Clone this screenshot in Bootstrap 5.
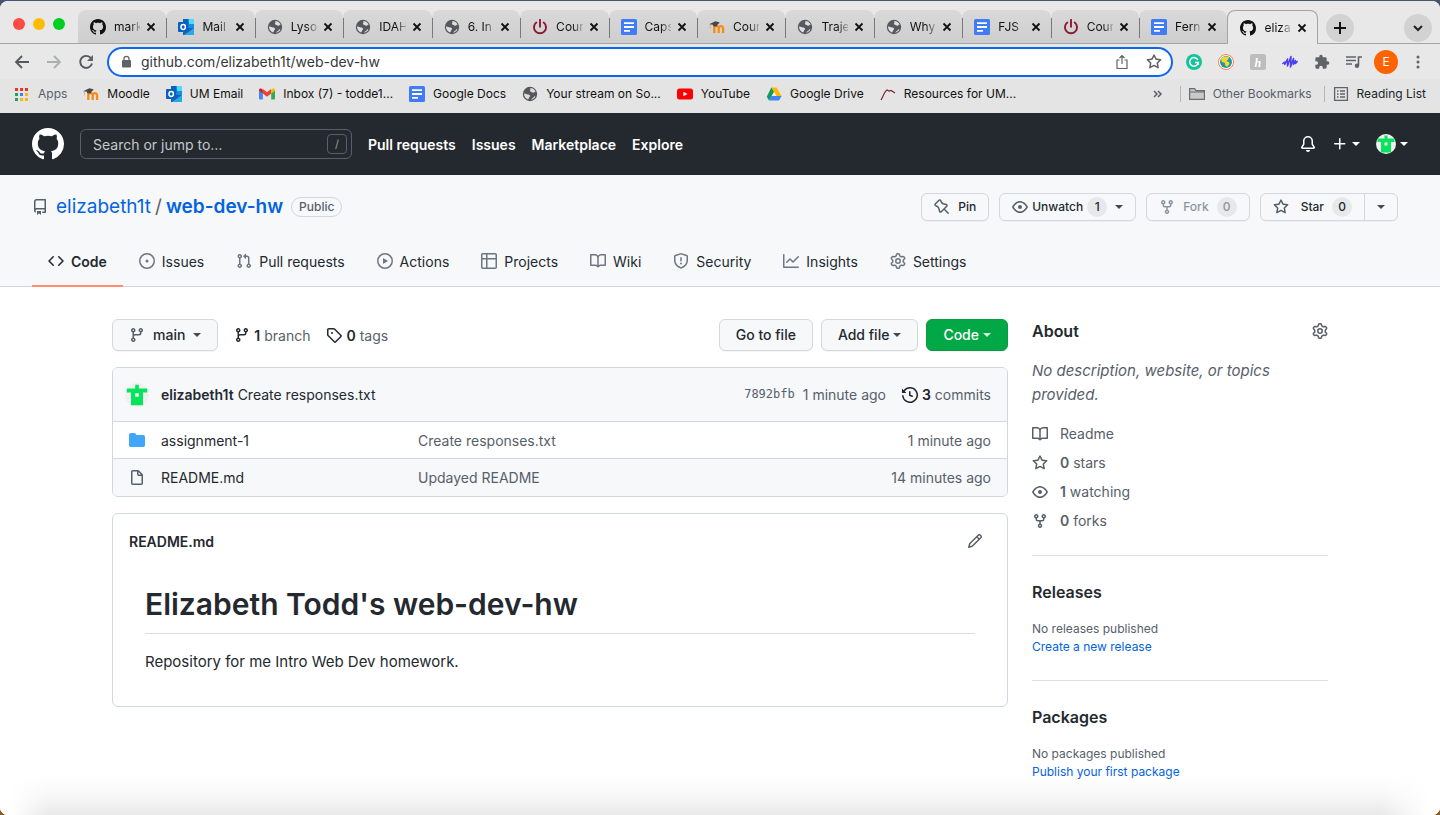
<!DOCTYPE html>
<html lang="en">
<head>
<meta charset="utf-8">
<meta name="viewport" content="width=device-width, initial-scale=1">
<title>elizabeth1t/web-dev-hw</title>
<link href="https://cdn.jsdelivr.net/npm/bootstrap@5.3.0/dist/css/bootstrap.min.css" rel="stylesheet">
<style>
  :root { --ink:#24292f; --muted:#57606a; --line:#d0d7de; --soft:#f6f8fa; --blue:#0563df; }
  body { font-family: Inter, "Liberation Sans", sans-serif; font-size:14px; line-height:21px; color:var(--ink);
         background:linear-gradient(#46526f 50%, #8a5a24 50%); }
  a { color:inherit; text-decoration:none; }
  a:hover { text-decoration:underline; }
  svg { flex:none; fill:currentColor; }
  .i16 { width:16px; height:16px; }
  .semi { font-weight:600; }
  .plain { background:none; border:0; padding:0; color:inherit; display:flex; align-items:center; justify-content:center; }
  .muted { color:var(--muted); }
  .link-blue { color:var(--blue); }
  .caret { width:0; height:0; border:4px solid transparent; border-top-color:currentColor; border-bottom:0; flex:none; }

  /* browser window */
  .window { border-radius:8px; overflow:hidden; background:#fff; margin-top:1px; min-height:calc(100vh - 1px); }
  .tabstrip { height:43px; padding-top:9px; background:#e8e8e8; border-bottom:1px solid #a3a5a2; font-size:12px; }
  .lights { flex:none; width:78px; padding-left:13px; gap:8px; height:27px; }
  .lights span { width:12px; height:12px; border-radius:50%; }
  .tabs-row { flex:1 1 0; min-width:0; }
  .tab { flex:1 1 0; min-width:0; height:33px; padding:0 9px 0 12px; gap:8px; background:linear-gradient(#d9d9d9,#cecece);
         border-radius:8px 8px 0 0; color:#111; position:relative; }
  .tab + .tab:not(.current)::before { content:""; position:absolute; left:0; top:8px; height:20px; width:1px; background:#77797b; }
  .tab .name { flex:1; min-width:0; margin-right:-3px; white-space:nowrap;
         -webkit-mask-image:linear-gradient(90deg,#000 60%,#0003); mask-image:linear-gradient(90deg,#000 60%,#0003); }
  .tab.current { background:#e9e9e9; border:1px solid #a3a5a2; border-bottom:0; height:34px; }
  .tab .plain { width:12px; height:12px; flex:none; }
  .round { width:28px; height:28px; border-radius:50%; background:#d2d2d2; color:#111; }
  .strip-end { flex:none; width:122px; padding:0 8px; height:36px; }
  .toolbar { height:35px; background:#e8e8e8; padding:0 14px; color:#5f6368; }
  .omni { height:30px; border:2px solid #0b66f2; border-radius:15px; background:#fff; margin:0 13px; padding:0 9px 0 12px; gap:8px; }
  .omni input { border:0; outline:0; background:none; flex:1; min-width:0; color:#35383c; font-size:14px; padding:0; }
  .profile { width:24px; height:24px; margin:0 -4px; border-radius:50%; background:#ff6200; color:#fff; font-size:12px; }
  .bookmarks { height:34px; background:#e4e4e4; padding:0 14px 5px; font-size:12px; color:#111; white-space:nowrap; }
  .bookmarks a { display:flex; align-items:center; gap:8px; }
  .rule { width:1px; height:16px; background:#b5b5b5; }

  /* site header */
  .site { background:#24292f; color:#fff; padding:15px 32px; min-height:62px; }
  .find { width:272px; height:30px; border:1px solid #57606a; border-radius:6px; padding:0 4px 0 12px; }
  .find input { background:none; border:0; outline:0; color:#fff; font-size:14px; padding:0; width:100%; }
  .find input::placeholder { color:#c5c8cb; opacity:1; }
  .slash { width:20px; height:20px; border:1px solid #57606a; border-radius:4px; color:#9a9fa5; font-size:11px; line-height:18px; text-align:center; flex:none; }
  .repo { background:var(--soft); border-bottom:1px solid var(--line); padding:17px 32px 0; }
  .repo-name { font-size:19px; line-height:30px; font-weight:400; }
  .pill { border:1px solid var(--line); border-radius:20px; font-size:12px; line-height:18px; padding:0 7px; font-weight:500; color:var(--muted); }
  .gbtn { --bs-btn-padding-y:0; display:inline-flex; align-items:center; font-size:14px; font-weight:500; height:32px; padding:0 16px; line-height:20px;
          border:1px solid #d5d8da; border-radius:6px; background:var(--soft); color:var(--ink); box-shadow:0 1px 0 #1b1f240a; white-space:nowrap; }
  .gbtn.mini { font-size:12px; height:28px; padding:0 12px; }
  .gbtn svg { color:#57606a; }
  .gbtn .caret { color:#424a53; }
  .gbtn:disabled { color:#8c959f; border-color:#d5d8da; background:var(--soft); opacity:1; }
  .gbtn:disabled svg { color:#8c959f; }
  .gbtn.green { background:#02a845; border-color:#0b9a42; color:#fff; }
  .gbtn.green .caret { color:#d5f2df; }
  .repo-actions { gap:10px; padding-right:10px; }
  .count { background:#e6e8ea; border-radius:20px; min-width:20px; line-height:20px; padding:0 6px; font-size:12px; }
  .sections { margin-top:15px; }
  .sections a { display:flex; align-items:center; gap:7px; padding:0 16px; height:50px; color:var(--ink); border-bottom:2px solid transparent; margin-bottom:-1px; }
  .sections a svg { color:#6e7781; }
  .sections a.on { border-color:#fd8c73; font-weight:600; }
  .sections a.on svg { color:var(--ink); }

  /* repository body */
  .wrap { max-width:1280px; margin:0 auto; padding:32px 32px 34px; display:grid; grid-template-columns:minmax(0,1fr) 296px; gap:24px; }
  .box { border:1px solid var(--line); border-radius:6px; overflow:hidden; background:#fff; }
  .commit { background:var(--soft); padding:16px 16px 16px 12px; height:53px; }
  .mono { font-family:"DejaVu Sans Mono", monospace; font-size:12px; }
  .files { width:100%; table-layout:fixed; border-collapse:separate; border-spacing:0; }
  .files td { height:37px; padding:0; border-top:1px solid var(--line); color:var(--muted); }
  .files tr:last-child td { background:var(--soft); height:38px; }
  .files .kind { width:48px; padding-left:16px; }
  .files .what { color:var(--ink); width:257px; }
  .files .when { text-align:right; padding-right:16px; width:180px; }
  .readme-bar { height:54px; padding:0 24px 0 16px; }
  .readme { padding:16px 32px 32px; font-size:15px; line-height:24px; }
  .readme h1 { font-size:30px; line-height:40px; font-weight:600; padding-bottom:9px; border-bottom:1px solid #d8dee4; margin-bottom:16px; }
  aside h2 { font-size:16px; line-height:24px; font-weight:600; margin-bottom:16px; }
  aside section { border-bottom:1px solid #d8dee4; padding-bottom:24px; margin-bottom:24px; }
  aside section:last-child { border:0; margin:0; padding:0; }
  .about { font-size:15px; line-height:24px; font-style:italic; margin-bottom:16px; }
  .facts li { display:flex; align-items:center; gap:12px; margin-bottom:8px; }
  .facts li:last-child { margin-bottom:0; }
  .tiny { font-size:12px; line-height:18px; }
  .page { background:
      linear-gradient(90deg,#fff 10px,#fff0 50px,#fff0 calc(100% - 60px),#fff calc(100% - 12px)) no-repeat bottom/100% 40px,
      linear-gradient(#fff,#f8f8f8 50%,#e9e9e9) no-repeat bottom/100% 40px, #fff; }
</style>
</head>
<body>
<svg width="0" height="0" class="d-none">
  <symbol id="mark-gh" viewBox="0 0 16 16"><path d="M8 0C3.58 0 0 3.58 0 8c0 3.54 2.29 6.53 5.47 7.59.4.07.55-.17.55-.38 0-.19-.01-.82-.01-1.49-2.01.37-2.53-.49-2.69-.94-.09-.23-.48-.94-.82-1.13-.28-.15-.68-.52-.01-.53.63-.01 1.08.58 1.23.82.72 1.21 1.87.87 2.33.66.07-.52.28-.87.51-1.07-1.78-.2-3.64-.89-3.64-3.95 0-.87.31-1.59.82-2.15-.08-.2-.36-1.02.08-2.12 0 0 .67-.21 2.2.82.64-.18 1.32-.27 2-.27.68 0 1.36.09 2 .27 1.53-1.04 2.2-.82 2.2-.82.44 1.1.16 1.92.08 2.12.51.56.82 1.27.82 2.15 0 3.07-1.87 3.75-3.65 3.95.29.25.54.73.54 1.48 0 1.07-.01 1.93-.01 2.2 0 .21.15.46.55.38A8.013 8.013 0 0016 8c0-4.42-3.58-8-8-8z"/></symbol>
  <symbol id="repo" viewBox="0 0 16 16"><path fill-rule="evenodd" d="M2 2.5A2.5 2.5 0 014.5 0h8.75a.75.75 0 01.75.75v12.5a.75.75 0 01-.75.75h-2.5a.75.75 0 110-1.5h1.75v-2h-8a1 1 0 00-.714 1.7.75.75 0 01-1.072 1.05A2.495 2.495 0 012 11.5v-9zm10.5-1V9h-8c-.356 0-.694.074-1 .208V2.5a1 1 0 011-1h8zM5 12.25v3.25a.25.25 0 00.4.2l1.45-1.087a.25.25 0 01.3 0L8.6 15.7a.25.25 0 00.4-.2v-3.25a.25.25 0 00-.25-.25h-3.5a.25.25 0 00-.25.25z"/></symbol>
  <symbol id="code" viewBox="0 0 16 16"><path d="M4.72 3.22a.75.75 0 011.06 1.06L2.06 8l3.72 3.72a.75.75 0 11-1.06 1.06L.47 8.53a.75.75 0 010-1.06l4.25-4.25zm6.56 0a.75.75 0 10-1.06 1.06L13.94 8l-3.72 3.72a.75.75 0 101.06 1.06l4.25-4.25a.75.75 0 000-1.06l-4.25-4.25z"/></symbol>
  <symbol id="issue" viewBox="0 0 16 16"><path d="M8 9.5a1.5 1.5 0 100-3 1.5 1.5 0 000 3z"/><path fill-rule="evenodd" d="M8 0a8 8 0 100 16A8 8 0 008 0zM1.5 8a6.5 6.5 0 1113 0 6.5 6.5 0 01-13 0z"/></symbol>
  <symbol id="pull" viewBox="0 0 16 16"><path fill-rule="evenodd" d="M7.177 3.073L9.573.677A.25.25 0 0110 .854v4.792a.25.25 0 01-.427.177L7.177 3.427a.25.25 0 010-.354zM3.75 2.5a.75.75 0 100 1.5.75.75 0 000-1.5zm-2.25.75a2.25 2.25 0 113 2.122v5.256a2.251 2.251 0 11-1.5 0V5.372A2.25 2.25 0 011.5 3.25zM11 2.5h-1V4h1a1 1 0 011 1v5.628a2.251 2.251 0 101.5 0V5A2.5 2.5 0 0011 2.5zm1 10.25a.75.75 0 111.5 0 .75.75 0 01-1.5 0zM3.75 12a.75.75 0 100 1.5.75.75 0 000-1.5z"/></symbol>
  <symbol id="play" viewBox="0 0 16 16"><path fill-rule="evenodd" d="M1.5 8a6.5 6.5 0 1113 0 6.5 6.5 0 01-13 0zM8 0a8 8 0 100 16A8 8 0 008 0zM6.379 5.227A.25.25 0 006 5.442v5.117a.25.25 0 00.379.214l4.264-2.559a.25.25 0 000-.428L6.379 5.227z"/></symbol>
  <symbol id="grid" viewBox="0 0 16 16"><path fill-rule="evenodd" d="M0 1.75C0 .784.784 0 1.75 0h12.5C15.216 0 16 .784 16 1.75v12.5A1.75 1.75 0 0114.25 16H1.75A1.75 1.75 0 010 14.25V1.75zM1.5 6.5v7.75c0 .138.112.25.25.25H5v-8H1.5zM5 5H1.5V1.75a.25.25 0 01.25-.25H5V5zm1.5 1.5v8h7.75a.25.25 0 00.25-.25V6.5h-8zm8-1.5h-8V1.5h7.75a.25.25 0 01.25.25V5z"/></symbol>
  <symbol id="book" viewBox="0 0 16 16"><path fill-rule="evenodd" d="M0 1.75A.75.75 0 01.75 1h4.253c1.227 0 2.317.59 3 1.501A3.744 3.744 0 0111.006 1h4.245a.75.75 0 01.75.75v10.5a.75.75 0 01-.75.75h-4.507a2.25 2.25 0 00-1.591.659l-.622.621a.75.75 0 01-1.06 0l-.622-.621A2.25 2.25 0 005.258 13H.75a.75.75 0 01-.75-.75V1.75zm8.755 3a2.25 2.25 0 012.25-2.25H14.5v9h-3.757c-.71 0-1.4.201-1.992.572l.004-7.322zm-1.504 7.324l.004-5.073-.002-2.253A2.25 2.25 0 005.003 2.5H1.5v9h3.757a3.75 3.75 0 011.994.574z"/></symbol>
  <symbol id="shield" viewBox="0 0 16 16"><path fill-rule="evenodd" d="M7.467.133a1.75 1.75 0 011.066 0l5.25 1.68A1.75 1.75 0 0115 3.48V7c0 1.566-.32 3.182-1.303 4.682-.983 1.498-2.585 2.813-5.032 3.855a1.7 1.7 0 01-1.33 0c-2.447-1.042-4.049-2.357-5.032-3.855C1.32 10.182 1 8.566 1 7V3.48a1.75 1.75 0 011.217-1.667l5.25-1.68zm.61 1.429a.25.25 0 00-.153 0l-5.25 1.68a.25.25 0 00-.174.238V7c0 1.358.275 2.666 1.057 3.86.784 1.194 2.121 2.34 4.366 3.297a.2.2 0 00.154 0c2.245-.956 3.582-2.104 4.366-3.298C13.225 9.666 13.5 8.36 13.5 7V3.48a.25.25 0 00-.174-.237l-5.25-1.68zM9 10.5a1 1 0 11-2 0 1 1 0 012 0zm-.25-5.75a.75.75 0 10-1.5 0v3a.75.75 0 001.5 0v-3z"/></symbol>
  <symbol id="graph" viewBox="0 0 16 16"><path d="M1.5 1.75a.75.75 0 00-1.5 0v12.5c0 .414.336.75.75.75h14.5a.75.75 0 000-1.5H1.5V1.75zm14.28 2.53a.75.75 0 00-1.06-1.06L10 7.94 7.53 5.47a.75.75 0 00-1.06 0L3.22 8.72a.75.75 0 001.06 1.06L7 7.06l2.47 2.47a.75.75 0 001.06 0l5.25-5.25z"/></symbol>
  <symbol id="gear" viewBox="0 0 16 16"><path fill-rule="evenodd" d="M7.429 1.525a6.593 6.593 0 011.142 0c.036.003.108.036.137.146l.289 1.105c.147.56.55.967.997 1.189.174.086.341.183.501.29.417.278.97.423 1.53.27l1.102-.303c.11-.03.175.016.195.046.219.31.41.641.573.989.014.031.022.11-.059.19l-.815.806c-.411.406-.562.957-.53 1.456a4.588 4.588 0 010 .582c-.032.499.119 1.05.53 1.456l.815.806c.08.08.073.159.059.19a6.494 6.494 0 01-.573.99c-.02.029-.086.074-.195.045l-1.103-.303c-.559-.153-1.112-.008-1.529.27-.16.107-.327.204-.5.29-.449.222-.851.628-.998 1.189l-.289 1.105c-.029.11-.101.143-.137.146a6.613 6.613 0 01-1.142 0c-.036-.003-.108-.037-.137-.146l-.289-1.105c-.147-.56-.55-.967-.997-1.189a4.502 4.502 0 01-.501-.29c-.417-.278-.97-.423-1.53-.27l-1.102.303c-.11.03-.175-.016-.195-.046a6.492 6.492 0 01-.573-.989c-.014-.031-.022-.11.059-.19l.815-.806c.411-.406.562-.957.53-1.456a4.587 4.587 0 010-.582c.032-.499-.119-1.05-.53-1.456l-.815-.806c-.08-.08-.073-.159-.059-.19a6.44 6.44 0 01.573-.99c.02-.029.086-.075.195-.045l1.103.303c.559.153 1.112.008 1.529-.27.16-.107.327-.204.5-.29.449-.222.851-.628.998-1.189l.289-1.105c.029-.11.101-.143.137-.146zM8 0c-.236 0-.47.01-.701.03-.743.065-1.29.615-1.458 1.261l-.29 1.106c-.017.066-.078.158-.211.224a5.994 5.994 0 00-.668.386c-.123.082-.233.09-.3.071L3.27 2.776c-.644-.177-1.392.02-1.82.63a7.977 7.977 0 00-.704 1.217c-.315.675-.111 1.422.363 1.891l.815.806c.05.048.098.147.088.294a6.084 6.084 0 000 .772c.01.147-.038.246-.088.294l-.815.806c-.474.469-.678 1.216-.363 1.891.2.428.436.835.704 1.218.428.609 1.176.806 1.82.63l1.103-.303c.066-.019.176-.011.299.071.213.143.436.272.668.386.133.066.194.158.212.224l.289 1.106c.169.646.715 1.196 1.458 1.26a8.094 8.094 0 001.402 0c.743-.064 1.29-.614 1.458-1.26l.29-1.106c.017-.066.078-.158.211-.224a5.98 5.98 0 00.668-.386c.123-.082.233-.09.3-.071l1.102.302c.644.177 1.392-.02 1.82-.63.268-.382.505-.789.704-1.217.315-.675.111-1.422-.364-1.891l-.814-.806c-.05-.048-.098-.147-.088-.294a6.1 6.1 0 000-.772c-.01-.147.039-.246.088-.294l.814-.806c.475-.469.679-1.216.364-1.891a7.992 7.992 0 00-.704-1.218c-.428-.609-1.176-.806-1.82-.63l-1.103.303c-.066.019-.176.011-.299-.071a5.991 5.991 0 00-.668-.386c-.133-.066-.194-.158-.212-.224L10.16 1.29C9.99.645 9.444.095 8.701.031A8.094 8.094 0 008 0zm1.5 8a1.5 1.5 0 11-3 0 1.5 1.5 0 013 0zM11 8a3 3 0 11-6 0 3 3 0 016 0z"/></symbol>
  <symbol id="branch" viewBox="0 0 16 16"><path fill-rule="evenodd" d="M11.75 2.5a.75.75 0 100 1.5.75.75 0 000-1.5zm-2.25.75a2.25 2.25 0 113 2.122V6A2.5 2.5 0 0110 8.5H6a1 1 0 00-1 1v1.128a2.251 2.251 0 11-1.5 0V5.372a2.25 2.25 0 111.5 0v1.836A2.492 2.492 0 016 7h4a1 1 0 001-1v-.628A2.25 2.25 0 019.5 3.25zM4.25 12a.75.75 0 100 1.5.75.75 0 000-1.5zM3.5 3.25a.75.75 0 111.5 0 .75.75 0 01-1.5 0z"/></symbol>
  <symbol id="tag" viewBox="0 0 16 16"><path fill-rule="evenodd" d="M2.5 7.775V2.75a.25.25 0 01.25-.25h5.025a.25.25 0 01.177.073l6.25 6.25a.25.25 0 010 .354l-5.025 5.025a.25.25 0 01-.354 0l-6.25-6.25a.25.25 0 01-.073-.177zm-1.5 0V2.75C1 1.784 1.784 1 2.75 1h5.025c.464 0 .91.184 1.238.513l6.25 6.25a1.75 1.75 0 010 2.474l-5.026 5.026a1.75 1.75 0 01-2.474 0l-6.25-6.25A1.75 1.75 0 011 7.775zM6 5a1 1 0 100 2 1 1 0 000-2z"/></symbol>
  <symbol id="history" viewBox="0 0 16 16"><path fill-rule="evenodd" d="M1.643 3.143L.427 1.927A.25.25 0 000 2.104V5.75c0 .138.112.25.25.25h3.646a.25.25 0 00.177-.427L2.715 4.215a6.5 6.5 0 11-1.18 4.458.75.75 0 10-1.493.154 8.001 8.001 0 101.6-5.684zM7.75 4a.75.75 0 01.75.75v2.992l2.028.812a.75.75 0 01-.557 1.392l-2.5-1A.75.75 0 017 8.25v-3.5A.75.75 0 017.75 4z"/></symbol>
  <symbol id="folder" viewBox="0 0 16 16"><path d="M1.75 1A1.75 1.75 0 000 2.75v10.5C0 14.216.784 15 1.75 15h12.5A1.75 1.75 0 0016 13.25v-8.5A1.75 1.75 0 0014.25 3h-6.5a.25.25 0 01-.2-.1l-.9-1.2c-.33-.44-.85-.7-1.4-.7h-3.5z"/></symbol>
  <symbol id="file" viewBox="0 0 16 16"><path fill-rule="evenodd" d="M3.75 1.5a.25.25 0 00-.25.25v11.5c0 .138.112.25.25.25h8.5a.25.25 0 00.25-.25V6H9.75A1.75 1.75 0 018 4.25V1.5H3.75zm5.75.56v2.19c0 .138.112.25.25.25h2.19L9.5 2.06zM2 1.75C2 .784 2.784 0 3.75 0h5.086c.464 0 .909.184 1.237.513l3.414 3.414c.329.328.513.773.513 1.237v8.086A1.75 1.75 0 0112.25 15h-8.5A1.75 1.75 0 012 13.25V1.75z"/></symbol>
  <symbol id="pencil" viewBox="0 0 16 16"><path fill-rule="evenodd" d="M11.013 1.427a1.75 1.75 0 012.474 0l1.086 1.086a1.75 1.75 0 010 2.474l-8.61 8.61c-.21.21-.47.364-.756.445l-3.251.93a.75.75 0 01-.927-.928l.929-3.25a1.75 1.75 0 01.445-.758l8.61-8.61zm1.414 1.06a.25.25 0 00-.354 0L10.811 3.75l1.439 1.44 1.263-1.263a.25.25 0 000-.354l-1.086-1.086zM11.189 6.25L9.75 4.81l-6.286 6.287a.25.25 0 00-.064.108l-.558 1.953 1.953-.558a.249.249 0 00.108-.064l6.286-6.286z"/></symbol>
  <symbol id="star" viewBox="0 0 16 16"><path fill-rule="evenodd" d="M8 .25a.75.75 0 01.673.418l1.882 3.815 4.21.612a.75.75 0 01.416 1.279l-3.046 2.97.719 4.192a.75.75 0 01-1.088.791L8 12.347l-3.766 1.98a.75.75 0 01-1.088-.79l.72-4.194L.818 6.374a.75.75 0 01.416-1.28l4.21-.611L7.327.668A.75.75 0 018 .25zm0 2.445L6.615 5.5a.75.75 0 01-.564.41l-3.097.45 2.24 2.184a.75.75 0 01.216.664l-.528 3.084 2.769-1.456a.75.75 0 01.698 0l2.77 1.456-.53-3.084a.75.75 0 01.216-.664l2.24-2.183-3.096-.45a.75.75 0 01-.564-.41L8 2.694v.001z"/></symbol>
  <symbol id="eye" viewBox="0 0 16 16"><path fill-rule="evenodd" d="M1.679 7.932c.412-.621 1.242-1.75 2.366-2.717C5.175 4.242 6.527 3.5 8 3.5c1.473 0 2.824.742 3.955 1.715 1.124.967 1.954 2.096 2.366 2.717a.119.119 0 010 .136c-.412.621-1.242 1.75-2.366 2.717C10.825 11.758 9.473 12.5 8 12.5c-1.473 0-2.824-.742-3.955-1.715C2.92 9.818 2.09 8.69 1.679 8.068a.119.119 0 010-.136zM8 2c-1.981 0-3.67.992-4.933 2.078C1.797 5.169.88 6.423.43 7.1a1.619 1.619 0 000 1.798c.45.678 1.367 1.932 2.637 3.024C4.329 13.008 6.019 14 8 14c1.981 0 3.67-.992 4.933-2.078 1.27-1.091 2.187-2.345 2.637-3.023a1.619 1.619 0 000-1.798c-.45-.678-1.367-1.932-2.637-3.023C11.671 2.992 9.981 2 8 2zm0 8a2 2 0 100-4 2 2 0 000 4z"/></symbol>
  <symbol id="fork" viewBox="0 0 16 16"><path fill-rule="evenodd" d="M5 3.25a.75.75 0 11-1.5 0 .75.75 0 011.5 0zm0 2.122a2.25 2.25 0 10-1.5 0v.878A2.25 2.25 0 005.75 8.5h1.5v2.128a2.251 2.251 0 101.5 0V8.5h1.5a2.25 2.25 0 002.25-2.25v-.878a2.25 2.25 0 10-1.5 0v.878a.75.75 0 01-.75.75h-4.5A.75.75 0 015 6.25v-.878zm3.75 7.378a.75.75 0 11-1.5 0 .75.75 0 011.5 0zm3-8.75a.75.75 0 100-1.5.75.75 0 000 1.5z"/></symbol>
  <symbol id="pin" viewBox="0 0 16 16"><path fill-rule="evenodd" d="M4.456.734a1.75 1.75 0 012.826.504l.613 1.327a3.081 3.081 0 002.084 1.707l2.454.584c1.332.317 1.8 1.972.832 2.94L11.06 10l3.72 3.72a.75.75 0 11-1.061 1.06L10 11.06l-2.204 2.205c-.968.968-2.623.5-2.94-.832l-.584-2.454a3.081 3.081 0 00-1.707-2.084l-1.327-.613a1.75 1.75 0 01-.504-2.826L4.456.734zM5.92 1.866a.25.25 0 00-.404-.072L1.794 5.516a.25.25 0 00.072.404l1.328.613A4.582 4.582 0 015.73 9.63l.584 2.454a.25.25 0 00.42.12l5.47-5.47a.25.25 0 00-.12-.42L9.63 5.73a4.581 4.581 0 01-3.098-2.537L5.92 1.866z"/></symbol>
  <symbol id="bell" viewBox="0 0 16 16"><path d="M8 16a2 2 0 001.985-1.75c.017-.137-.097-.25-.235-.25h-3.5c-.138 0-.252.113-.235.25A2 2 0 008 16z"/><path fill-rule="evenodd" d="M8 1.5A3.5 3.5 0 004.5 5v2.947c0 .346-.102.683-.294.97l-1.703 2.556a.018.018 0 00-.003.01l.001.006.017.011h10.964l.017-.011.001-.007a.017.017 0 00-.003-.01l-1.703-2.554a1.75 1.75 0 01-.294-.97V5A3.5 3.5 0 008 1.5zM3 5a5 5 0 0110 0v2.947c0 .05.015.098.042.139l1.703 2.555A1.518 1.518 0 0113.482 13H2.518a1.518 1.518 0 01-1.263-2.36l1.703-2.554A.25.25 0 003 7.947V5z"/></symbol>
  <symbol id="plus" viewBox="0 0 16 16"><path d="M7.75 2a.75.75 0 01.75.75V7h4.25a.75.75 0 110 1.5H8.5v4.25a.75.75 0 11-1.5 0V8.5H2.75a.75.75 0 010-1.5H7V2.75A.75.75 0 017.75 2z"/></symbol>
  <symbol id="avatar" viewBox="0 0 20 20"><circle cx="10" cy="10" r="10" fill="#f0f0f0"/><path fill="#05e45c" fill-rule="evenodd" d="M8.500 1.500h3v3h7v3.500h-3.500v10.500h-10v-10.500h-3.500v-3.500h7zM8.500 8.500v3h3v-3z"/></symbol>

  <symbol id="x" viewBox="0 0 12 12"><path d="M2.500 2.500l7 7M9.500 2.500l-7 7" stroke="currentColor" stroke-width="1.800" fill="none"/></symbol>
  <symbol id="globe" viewBox="0 0 16 16"><circle cx="8" cy="8" r="7.200" fill="#55585e"/><path fill="#dedede" d="M8.200 1.900c2.500 0 4.600 1.500 5.500 3.600-1.200.3-1.600 1.300-2.700 1.300-1 0-1-.9-2-1-.8-.1-1.300-.5-1.100-1.200.2-.8 1-.8.3-2.700zM2 7.600c1.700-.2 2.600.8 3.800.8 1.400 0 2.400.5 2.300 1.600-.1.900-1.200 1-1.200 2 0 .6-.4 1-.9 1.400C3.600 12.600 2 10.400 2 7.600zM9.300 13.800c.3-.8.600-1.600 1.500-1.900.8-.3 1.300-.9 1.400-1.700l1.200.400c-.7 1.600-2.300 2.900-4.100 3.200z"/></symbol>
  <symbol id="outlook" viewBox="0 0 16 16"><path fill="#1490df" d="M5 0h11v10H5z"/><path fill="#28a8ea" d="M5 5h5.500v5H5z"/><path fill="#50d9ff" d="M10.500 0H16v5h-5.500z"/><path fill="#0364b8" d="M5 0h5.500v5H5z"/><path fill="#1066b5" d="M5 9h11v7H5z"/><path fill="#28a8ea" d="M16 9v7H6z"/><rect y="3" width="10.500" height="10" rx="1" fill="#0a5fc0"/><ellipse cx="5.200" cy="8" rx="2.200" ry="2.400" fill="none" stroke="#fff" stroke-width="1.500"/></symbol>
  <symbol id="power" viewBox="0 0 16 16"><path d="M4.300 3.600a6 6 0 1 0 7.400 0M8 .8v7" fill="none" stroke="#8b1a33" stroke-width="1.900" stroke-linecap="round"/></symbol>
  <symbol id="docs" viewBox="0 0 16 16"><rect width="16" height="16" rx="1.500" fill="#3f7cf6"/><path d="M3 4.200h10M3 8h10M3 11.800h6" stroke="#fff" stroke-width="1.800"/></symbol>
  <symbol id="moodle" viewBox="0 0 16 16"><path d="M5.300 14V9.300a2.200 2.200 0 0 1 4.400 0V14M9.700 9.300a2.200 2.200 0 0 1 4.400 0V14" fill="none" stroke="#f98a12" stroke-width="2.300"/><path fill="#4a4643" d="M0 5.200 6.500 2.300l4.300 1.200L8.500 5.800 7.800 7.500 4 7.200V5.800z"/><path d="M1.500 5.300v4" stroke="#caa982" stroke-width=".800"/></symbol>
  <symbol id="gmail" viewBox="0 0 16 16"><path fill="#4285f4" d="M1 13.500h2.800V7L0 4v8.500a1 1 0 0 0 1 1z"/><path fill="#34a853" d="M12.200 13.500H15a1 1 0 0 0 1-1V4l-3.800 3z"/><path fill="#ea4335" d="M3.800 7.500V3L8 6.200 12.200 3v4.500L8 10.700z"/><path fill="#c5221f" d="M0 4.500V4c0-1.500 1.500-2 2.600-1.200L3.800 3.700v3.800z"/><path fill="#fbbc04" d="M16 4.500V4c0-1.500-1.500-2-2.600-1.200l-1.200.900v3.800z"/></symbol>
  <symbol id="youtube" viewBox="0 0 16 16"><rect y="2.500" width="16" height="11" rx="2.500" fill="#f00"/><path fill="#fff" d="M6.400 5.700v4.600L10.500 8z"/></symbol>
  <symbol id="drive" viewBox="0 0 16 16"><path fill="#0f9d58" d="M5.300 1.500h.4l2.500 4.300L3 14.500.8 10.800z"/><path fill="#ffba00" d="M5.400 1.500h5.200l5 8.500h-5.200z"/><path fill="#4285f4" d="M5 10h10.600L13 14.500H3z"/><path fill="#e9f0fb" d="M8.100 5.900 10.500 10H5.700z"/></symbol>
</svg>

<div class="window d-flex flex-column">
  <div class="tabstrip d-flex">
    <div class="lights d-flex align-items-center"><span style="background:#fe4a42"></span><span style="background:#febc02"></span><span style="background:#00cf22"></span></div>
    <div class="tabs-row d-flex" id="tabs"></div>
    <div class="strip-end d-flex align-items-center justify-content-between">
      <button class="plain round" aria-label="New tab"><svg width="14" height="14"><path d="M7 1v12M1 7h12" stroke="#111" stroke-width="2"/></svg></button>
      <button class="plain round" aria-label="Search tabs"><svg width="12" height="12"><path d="M2 4l4 4 4-4" fill="none" stroke="#222" stroke-width="2"/></svg></button>
    </div>
  </div>

  <div class="toolbar d-flex align-items-center">
    <div class="d-flex gap-3">
      <button class="plain" aria-label="Back"><svg class="i16"><path d="M15 8H2M8 2L2 8l6 6" fill="none" stroke="#55595e" stroke-width="1.800"/></svg></button>
      <button class="plain" aria-label="Forward"><svg class="i16"><path d="M1 8h13M8 2l6 6-6 6" fill="none" stroke="#acaeb0" stroke-width="1.800"/></svg></button>
      <button class="plain" aria-label="Reload"><svg class="i16"><path d="M13 4.200A6 6 0 1 0 14 9.500" fill="none" stroke="#55595e" stroke-width="1.900"/><path d="M15 1v6H9z"/></svg></button>
    </div>
    <div class="omni d-flex align-items-center flex-grow-1">
      <svg width="12" height="14" viewBox="0 0 12 14"><rect x="1" y="5" width="9" height="7.500" rx="1"/><path d="M3 5.500V3.800a2.500 2.500 0 0 1 5 0v1.700" fill="none" stroke="currentColor" stroke-width="1.300"/></svg>
      <input type="text" aria-label="Address" value="github.com/elizabeth1t/web-dev-hw">
      <button class="plain me-2" aria-label="Share"><svg class="i16"><path d="M5.500 6H3v8.500h10V6h-2.500M8 10V1.500M5.500 4L8 1.500 10.500 4" fill="none" stroke="currentColor" stroke-width="1.200"/></svg></button>
      <button class="plain" aria-label="Bookmark"><svg class="i16"><use href="#star"/></svg></button>
    </div>
    <div class="d-flex align-items-center gap-3">
      <svg class="i16" viewBox="0 0 16 16"><circle cx="8" cy="8" r="8" fill="#15c39a"/><path d="M11.800 5.800A4.300 4.300 0 1 0 12.200 9M9 8.500h3.300V11" fill="none" stroke="#fff" stroke-width="1.500"/></svg>
      <svg class="i16" viewBox="0 0 16 16"><circle cx="8" cy="8" r="7.500" fill="#fff" stroke="#ff7b50"/><circle cx="8" cy="8" r="6" fill="#2196a6"/><path fill="#f2d92a" d="M3 5c2-3 5-3 8-2l-1 3-2 1 3 1 .500 2-2.500 3-2-2V9L4 8z"/></svg>
      <svg class="i16" viewBox="0 0 16 16"><rect width="16" height="16" rx="2" fill="#bdbdbd"/><text x="4.500" y="12.500" font-size="12" font-weight="700" fill="#fff" font-family="Liberation Serif, serif" font-style="italic">h</text></svg>
      <svg class="i16" viewBox="0 0 16 16"><path d="M.8 9.500 2.800 8v2.500L5.500 5v7L9 2.500 8.500 13 11.500 4.500v6L13.500 6.500v3l1.700-2" fill="none" stroke="#4b3cf5" stroke-width="1.500" stroke-linecap="round" stroke-linejoin="round"/></svg>
      <svg class="i16" viewBox="0 0 24 24"><path d="M20.500 11H19V7a2 2 0 0 0-2-2h-4V3.500a2.500 2.500 0 0 0-5 0V5H4a2 2 0 0 0-2 2v3.800h1.500a2.700 2.700 0 0 1 0 5.400H2V20c0 1.100.9 2 2 2h3.800v-1.500a2.700 2.700 0 0 1 5.400 0V22H17a2 2 0 0 0 2-2v-4h1.500a2.500 2.500 0 0 0 0-5z"/></svg>
      <svg class="i16" viewBox="0 0 16 16"><path d="M0 3h10M0 6.500h10M0 10h6" stroke="currentColor" stroke-width="1.500"/><path d="M12.500 11.500V3H16" fill="none" stroke="currentColor" stroke-width="1.600"/><circle cx="11" cy="11.700" r="2.200"/></svg>
      <button class="plain profile" aria-label="Profile">E</button>
      <button class="plain" aria-label="Menu"><svg class="i16"><circle cx="8" cy="3" r="1.500"/><circle cx="8" cy="8" r="1.500"/><circle cx="8" cy="13" r="1.500"/></svg></button>
    </div>
  </div>

  <div class="bookmarks d-flex align-items-center justify-content-between">
    <div class="d-flex gap-3">
      <a href="#" class="muted"><svg class="i16"><path fill="#f03226" d="M1 2h3v3H1zM6 2h3v3H6zM11 2h3v3h-3z"/><path fill="#1fa45c" d="M1 7h3v3H1zM1 12h3v3H1z"/><path fill="#3b82f6" d="M6 7h3v3H6z"/><path fill="#fbb516" d="M11 7h3v3h-3zM6 12h3v3H6zM11 12h3v3h-3z"/></svg>Apps</a>
      <a href="#"><svg class="i16"><use href="#moodle"/></svg>Moodle</a>
      <a href="#"><svg class="i16"><use href="#outlook"/></svg>UM Email</a>
      <a href="#"><svg class="i16"><use href="#gmail"/></svg>Inbox (7) - todde1...</a>
      <a href="#"><svg class="i16"><use href="#docs"/></svg>Google Docs</a>
      <a href="#"><svg class="i16"><use href="#globe"/></svg>Your stream on So...</a>
      <a href="#"><svg class="i16"><use href="#youtube"/></svg>YouTube</a>
      <a href="#"><svg class="i16"><use href="#drive"/></svg>Google Drive</a>
      <a href="#"><svg class="i16"><path d="M1 14C3 11 4 6 7 4l2 1 2-.5 4 2.500" fill="none" stroke="#7c2438" stroke-width="1.200"/></svg>Resources for UM...</a>
    </div>
    <div class="d-flex align-items-center gap-2 muted">
      <button class="plain me-2" aria-label="More bookmarks"><svg width="12" height="12"><path d="M2 3l3 3-3 3M6 3l3 3-3 3" fill="none" stroke="currentColor" stroke-width="1.500"/></svg></button>
      <span class="rule"></span>
      <a href="#"><svg class="i16"><path d="M.6 13.400V2.600h5l1.500 2h8.300v8.800zM.6 6h14.800" fill="#c9c9c9" stroke="#6a6d70" stroke-width="1.200"/></svg>Other Bookmarks</a>
      <span class="rule ms-1"></span>
      <a href="#" class="text-body"><svg class="i16"><path d="M1.600 1.600h12.800v12.800H1.600z" fill="none" stroke="#5f6368" stroke-width="1.300"/><path d="M4 5h1.500M7 5h5M4 8h1.500M7 8h5M4 11h1.500M7 11h5" stroke="#5f6368" stroke-width="1.400"/></svg>Reading List</a>
    </div>
  </div>

  <header class="site d-flex align-items-center">
    <a href="#" aria-label="Home" class="d-flex me-3"><svg width="32" height="32"><use href="#mark-gh"/></svg></a>
    <form class="find d-flex align-items-center me-3"><input type="text" placeholder="Search or jump to…" aria-label="Search"><span class="slash">/</span></form>
    <nav class="d-flex gap-3 semi"><a href="#">Pull requests</a><a href="#">Issues</a><a href="#">Marketplace</a><a href="#">Explore</a></nav>
    <div class="d-flex align-items-center gap-3 ms-auto">
      <button class="plain" aria-label="Notifications"><svg class="i16"><use href="#bell"/></svg></button>
      <button class="plain gap-1" aria-label="Create new"><svg class="i16"><use href="#plus"/></svg><span class="caret"></span></button>
      <button class="plain gap-1" aria-label="Account"><svg width="20" height="20"><use href="#avatar"/></svg><span class="caret"></span></button>
    </div>
  </header>

  <div class="repo">
    <div class="d-flex align-items-center justify-content-between">
      <div class="d-flex align-items-center gap-2">
        <svg class="i16 muted"><use href="#repo"/></svg>
        <h1 class="repo-name mb-0"><a href="#" class="link-blue">elizabeth1t</a><span class="muted mx-1">/</span><a href="#" class="link-blue semi">web-dev-hw</a></h1>
        <span class="pill">Public</span>
      </div>
      <div class="d-flex repo-actions">
        <button class="btn gbtn mini gap-2"><svg class="i16"><use href="#pin"/></svg>Pin</button>
        <button class="btn gbtn mini gap-1"><svg class="i16"><use href="#eye"/></svg>Unwatch <span class="count">1</span><span class="caret ms-1"></span></button>
        <button class="btn gbtn mini gap-1" disabled><svg class="i16 me-1"><use href="#fork"/></svg>Fork <span class="count ms-1">0</span></button>
        <div class="btn-group"><button class="btn gbtn mini gap-1"><svg class="i16 me-2"><use href="#star"/></svg>Star <span class="count ms-1">0</span></button><button class="btn gbtn mini" aria-label="Lists"><span class="caret"></span></button></div>
      </div>
    </div>
    <nav class="sections d-flex">
      <a href="#" class="on"><svg class="i16"><use href="#code"/></svg>Code</a>
      <a href="#"><svg class="i16"><use href="#issue"/></svg>Issues</a>
      <a href="#"><svg class="i16"><use href="#pull"/></svg>Pull requests</a>
      <a href="#"><svg class="i16"><use href="#play"/></svg>Actions</a>
      <a href="#"><svg class="i16"><use href="#grid"/></svg>Projects</a>
      <a href="#"><svg class="i16"><use href="#book"/></svg>Wiki</a>
      <a href="#"><svg class="i16"><use href="#shield"/></svg>Security</a>
      <a href="#"><svg class="i16"><use href="#graph"/></svg>Insights</a>
      <a href="#"><svg class="i16"><use href="#gear"/></svg>Settings</a>
    </nav>
  </div>

  <div class="page flex-grow-1">
    <div class="wrap">
      <main>
        <div class="d-flex align-items-center justify-content-between mb-3">
          <div class="d-flex align-items-center gap-3">
            <button class="btn gbtn gap-2"><svg class="i16"><use href="#branch"/></svg>main<span class="caret"></span></button>
            <a href="#" class="d-flex align-items-center gap-1"><svg class="i16"><use href="#branch"/></svg><span><strong class="semi">1</strong> <span class="muted">branch</span></span></a>
            <a href="#" class="d-flex align-items-center gap-1"><svg class="i16"><use href="#tag"/></svg><span><strong class="semi">0</strong> <span class="muted">tags</span></span></a>
          </div>
          <div class="d-flex gap-2">
            <button class="btn gbtn">Go to file</button>
            <button class="btn gbtn gap-1">Add file<span class="caret"></span></button>
            <button class="btn gbtn green semi gap-1">Code<span class="caret"></span></button>
          </div>
        </div>

        <div class="box mb-3">
          <div class="commit d-flex align-items-center justify-content-between">
            <div class="d-flex align-items-center gap-1"><svg width="24" height="24" class="me-2"><use href="#avatar"/></svg><a href="#" class="semi">elizabeth1t</a><a href="#">Create responses.txt</a></div>
            <div class="d-flex align-items-center muted gap-2"><a href="#" class="mono">7892bfb</a><span>1 minute ago</span><a href="#" class="d-flex align-items-center gap-1 ms-2"><svg class="i16 text-dark"><use href="#history"/></svg><span><strong class="semi text-dark">3</strong> commits</span></a></div>
          </div>
          <table class="files">
            <tr><td class="kind"><svg class="i16 d-block" style="color:#3fa6fb"><use href="#folder"/></svg></td><td class="what"><a href="#">assignment-1</a></td><td><a href="#">Create responses.txt</a></td><td class="when">1 minute ago</td></tr>
            <tr><td class="kind"><svg class="i16 d-block"><use href="#file"/></svg></td><td class="what"><a href="#">README.md</a></td><td><a href="#">Updayed README</a></td><td class="when">14 minutes ago</td></tr>
          </table>
        </div>

        <div class="box">
          <div class="readme-bar d-flex align-items-center justify-content-between"><a href="#" class="semi">README.md</a><button class="plain muted" aria-label="Edit"><svg class="i16"><use href="#pencil"/></svg></button></div>
          <article class="readme"><h1>Elizabeth Todd's web-dev-hw</h1><p class="mb-0">Repository for me Intro Web Dev homework.</p></article>
        </div>
      </main>

      <aside>
        <section>
          <div class="d-flex justify-content-between"><h2>About</h2><button class="plain muted mb-3" aria-label="Edit details"><svg class="i16"><use href="#gear"/></svg></button></div>
          <p class="about muted">No description, website, or topics provided.</p>
          <ul class="facts list-unstyled muted mb-0">
            <li><svg class="i16"><use href="#book"/></svg><a href="#">Readme</a></li>
            <li><svg class="i16"><use href="#star"/></svg><a href="#"><strong class="semi">0</strong> stars</a></li>
            <li><svg class="i16"><use href="#eye"/></svg><a href="#"><strong class="semi">1</strong> watching</a></li>
            <li><svg class="i16"><use href="#fork"/></svg><a href="#"><strong class="semi">0</strong> forks</a></li>
          </ul>
        </section>
        <section class="tiny"><h2>Releases</h2><div class="muted">No releases published</div><a href="#" class="link-blue">Create a new release</a></section>
        <section class="tiny"><h2>Packages</h2><div class="muted">No packages published</div><a href="#" class="link-blue">Publish your first package</a></section>
      </aside>
    </div>
  </div>
</div>

<script>
  const tabs = [['mark-gh','mark'],['outlook','Mail'],['globe','Lyso'],['globe','IDAH'],['globe','6. In'],['power','Cour'],['docs','Caps'],
    ['moodle','Cour'],['globe','Traje'],['globe','Why'],['docs','FJS'],['power','Cour'],['docs','Fern'],['mark-gh','eliza']];
  document.getElementById('tabs').innerHTML = tabs.map(([icon, name], i) =>
    `<div class="tab d-flex align-items-center${i === tabs.length - 1 ? ' current' : ''}"><svg class="i16"><use href="#${icon}"/></svg><span class="name">${name}</span><button class="plain" aria-label="Close tab"><svg width="12" height="12"><use href="#x"/></svg></button></div>`).join('');
</script>
<script src="https://cdn.jsdelivr.net/npm/bootstrap@5.3.0/dist/js/bootstrap.bundle.min.js"></script>
</body>
</html>
